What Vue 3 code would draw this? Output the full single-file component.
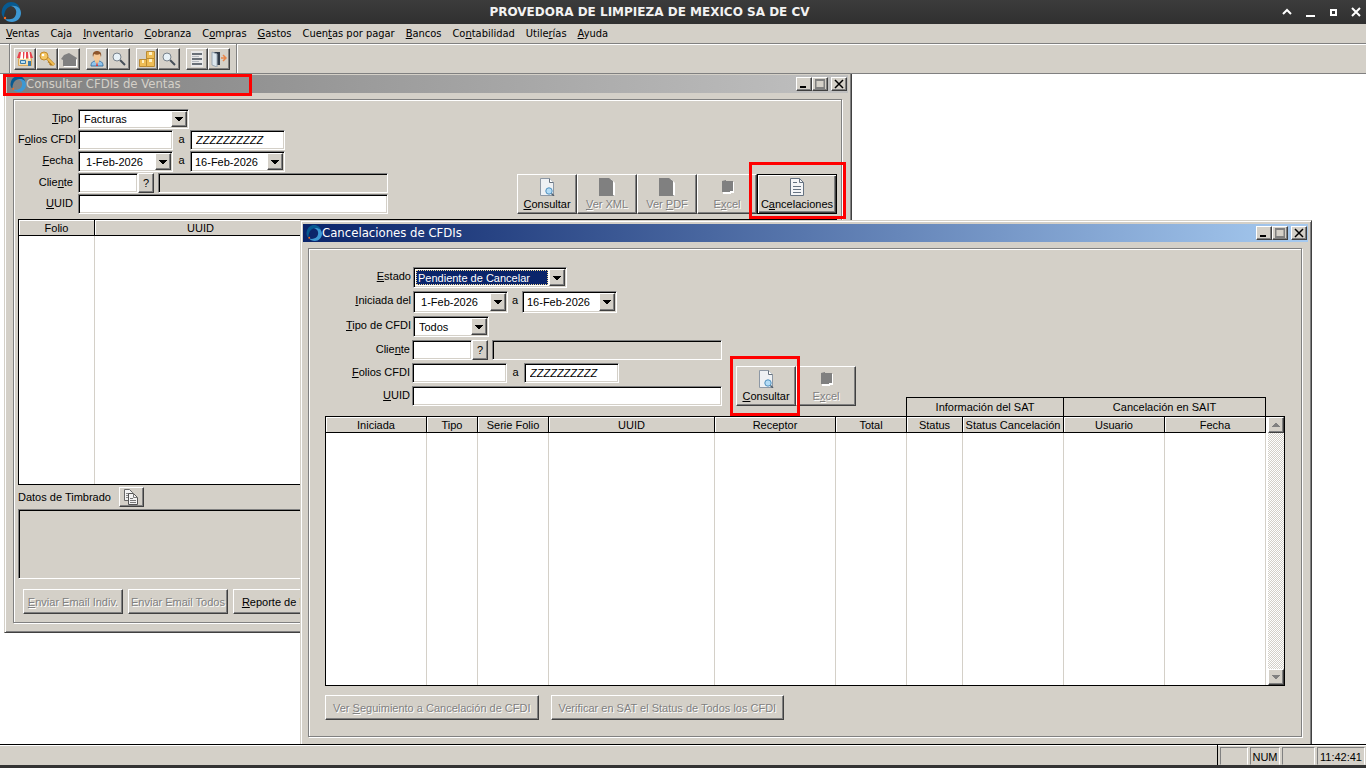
<script setup>
import { ref, h } from 'vue';

// "&" marks the access key, as in Windows menus
const Mnemonic = (props) => {
    const [before, rest] = props.text.split('&');
    if (rest === undefined) return h('span', before);
    return h('span', [before, h('u', rest[0]), rest.slice(1)]);
};
Mnemonic.props = ['text'];

const menus = ['&Ventas', 'Caja', '&Inventario', '&Cobranza', 'C&ompras', '&Gastos', 'Cuen&tas por pagar', '&Bancos', 'Co&ntabilidad', 'Utile&rías', '&Ayuda'];

const toolGroups = [
    ['store', 'key', 'house'],
    ['person', 'lens'],
    ['boxes', 'lens'],
    ['list', 'door'],
];

const salesActions = [
    { text: '&Consultar', icon: 'search-doc' },
    { text: '&Ver XML', icon: 'solid-doc', disabled: true },
    { text: 'Ver &PDF', icon: 'solid-doc', disabled: true },
    { text: 'E&xcel', icon: 'solid-book', disabled: true },
    { text: 'C&ancelaciones', icon: 'text-doc', marked: true, isDefault: true },
];
const cancelActions = [
    { text: '&Consultar', icon: 'search-doc', marked: true },
    { text: 'E&xcel', icon: 'solid-book', disabled: true },
];

const columns = [
    { text: 'Iniciada', width: 101 },
    { text: 'Tipo', width: 51 },
    { text: 'Serie Folio', width: 71 },
    { text: 'UUID', width: 166 },
    { text: 'Receptor', width: 121 },
    { text: 'Total', width: 71 },
    { text: 'Status', width: 56 },
    { text: 'Status Cancelación', width: 101 },
    { text: 'Usuario', width: 101 },
    { text: 'Fecha', width: 101 },
];

const tipo = ref('Facturas');
const estado = ref('Pendiente de Cancelar');
const tipoCfdi = ref('Todos');
const desde = ref(' 1-Feb-2026');
const hasta = ref('16-Feb-2026');
const folioFin = ref('ZZZZZZZZZZ');
</script>

<template>
    <svg class="defs" aria-hidden="true">
        <symbol id="logo" viewBox="0 0 20 20">
            <path d="M3 16C1 14 0 11 1 8 2 3 6 0 10 0c5 0 8 3 9 7-3-3-7-4-10-2.500C5 6 3 10 3 16z" fill="#075a91" />
            <path d="M10 4c6-1 10 2 10 7 0 5-4 9-9 9-3 0-6-1-7-3 5 1 10 0 11-5 1-4-1-7-5-8z" fill="#3d98d3" />
            <circle cx="4" cy="16" r="1.200" fill="#f26b21" />
        </symbol>
        <symbol id="store" viewBox="0 0 16 16">
            <path d="M1.500 7.500h13v7h-13z" fill="#f6deae" stroke="#d9a95c" />
            <path d="M2 1h12l2 6H0z" fill="#e9444c" />
            <path d="M4 1h2v7H3zM7.500 1h1.500v7H7zM11 1h1.500l1 7h-2z" fill="#fff" />
            <path d="M3.500 9.500h5v3h-5z" fill="#b8e2f7" stroke="#3979a8" />
            <path d="M11 10h3v5h-3z" fill="#3979a8" />
        </symbol>
        <symbol id="key" viewBox="0 0 16 16">
            <path d="M8 7l7 7M11 10l-1 2M13 12l-2 2" stroke="#b37a1b" stroke-width="3" />
            <path d="M8 7l7 7" stroke="#f0bd55" stroke-width="2" />
            <circle cx="5" cy="5" r="4" fill="#f5c763" stroke="#c38a2b" />
            <circle cx="4" cy="4" r="1.300" fill="#fff" />
        </symbol>
        <symbol id="house" viewBox="0 0 16 16">
            <path d="M9 3l7 5v8H3V9z" fill="#fff" />
            <path d="M8 2l8 5-1 2v6H2V9L0 8l3-4z" fill="#808080" />
        </symbol>
        <symbol id="person" viewBox="0 0 16 16">
            <path d="M2 15c0-4 2-5 6-5s6 1 6 5z" fill="#8ec4ed" stroke="#3d75a4" />
            <path d="M6 8h4v3l-2 2-2-2z" fill="#f2c38e" />
            <ellipse cx="8" cy="5.500" rx="3.500" ry="4" fill="#f5c896" />
            <path d="M4 6C3 2 5 0 8 0s5 2 4 6l-1-3c-2 1-4 1-6 0z" fill="#8e562c" />
            <path d="M8 11l-1 4h2z" fill="#d33" />
        </symbol>
        <symbol id="lens" viewBox="0 0 16 16">
            <path d="M9 9l5 5" stroke="#454f58" stroke-width="2" />
            <circle cx="6" cy="6" r="4" fill="#e7f1f7" stroke="#78828b" />
        </symbol>
        <symbol id="boxes" viewBox="0 0 16 16">
            <g fill="#eebd55" stroke="#b98a34">
                <path d="M7.500.500h8v7h-8zM.500 8.500h7v7h-7zM7.500 7.500h8v8h-8z" />
            </g>
            <path d="M10 1h3v3h-3zM3 9h2v3H3zM10 8h3v3h-3z" fill="#fff1c5" />
        </symbol>
        <symbol id="list" viewBox="0 0 16 16">
            <path d="M2 0h12v16H2z" fill="#e8e8e8" />
            <path d="M3 3h10M3 8h10M3 13h10" stroke="#697078" stroke-width="2" />
            <path d="M3 5.500h7M3 10.500h7" stroke="#b5bac0" />
        </symbol>
        <symbol id="door" viewBox="0 0 16 16">
            <path d="M1 1h8v13H1z" fill="#303b49" />
            <path d="M1 1l5 2v13l-5-2z" fill="#dce7ef" stroke="#9aa7b3" />
            <path d="M10 7h4M12 4l3 3-3 3" fill="none" stroke="#e7864b" stroke-width="1.500" />
        </symbol>
        <symbol id="search-doc" viewBox="0 0 16 18">
            <path d="M1.500.500h9l4 4v13h-13z" fill="#eef1f4" stroke="#8d98a5" />
            <path d="M10.500.500v4h4" fill="#fff" stroke="#66727f" />
            <path d="M12 15l3 3" stroke="#53606d" stroke-width="1.500" />
            <circle cx="10" cy="13" r="3.200" fill="#b4dcf6" stroke="#4f90bd" />
        </symbol>
        <symbol id="solid-doc" viewBox="0 0 16 18">
            <path d="M1 1h11l4 4v14H2z" fill="#fff" />
            <path d="M0 0h10l4 3v14l2 1H0z" fill="#808080" />
        </symbol>
        <symbol id="solid-book" viewBox="0 0 16 18">
            <path d="M4 4h11v11h-3v1H4z" fill="#fff" />
            <path d="M3 3l4-1v1h7v10h-3v1H3z" fill="#808080" />
        </symbol>
        <symbol id="text-doc" viewBox="0 0 16 18">
            <path d="M1.500.500h9l4 4v13h-13z" fill="#f4f5f7" stroke="#667382" />
            <path d="M10.500.500v4h4" fill="none" stroke="#667382" />
            <path d="M4 4.500h4M4 8.500h8M4 11.500h8M4 14.500h8" stroke="#667382" />
        </symbol>
        <symbol id="copy" viewBox="0 0 16 16">
            <path d="M1.500.500h5l3 3v8h-8z" fill="#f2f2f2" stroke="#666" />
            <path d="M3 4.500h4M3 6.500h4M3 8.500h3" stroke="#888" />
            <path d="M5.500 4.500h5l4 4v7h-9z" fill="#f2f2f2" stroke="#555" />
            <path d="M10.500 4.500v4h4M7 9.500h3M7 11.500h6M7 13.500h6" fill="none" stroke="#777" />
        </symbol>
        <symbol id="arrow" viewBox="0 0 8 4">
            <path d="M0 0h8v1H7v1H6v1H5v1H3V3H2V2H1V1H0z" fill="currentColor" />
        </symbol>
    </svg>

    <div class="app">
        <header class="titlebar">
            <svg class="app-logo"><use href="#logo" /></svg>
            <h1>PROVEDORA DE LIMPIEZA DE MEXICO SA DE CV</h1>
            <div class="sys">
                <button aria-label="Enrollar"><svg viewBox="0 0 10 10"><path d="M1 7l4-4 4 4" /></svg></button>
                <button aria-label="Minimizar"><svg viewBox="0 0 10 10"><path d="M1 9h9" /></svg></button>
                <button aria-label="Maximizar"><svg viewBox="0 0 10 10"><path d="M3 3h5v5H3z" /></svg></button>
                <button aria-label="Cerrar"><svg viewBox="0 0 10 10"><path d="M1 1l8 8M9 1L1 9" /></svg></button>
            </div>
        </header>

        <nav class="menubar">
            <button v-for="menu in menus" :key="menu"><Mnemonic :text="menu" /></button>
        </nav>

        <div class="toolbar">
            <div class="toolbox">
                <div v-for="(group, g) in toolGroups" :key="g" class="tool-group">
                    <button v-for="icon in group" :key="icon" :aria-label="icon" class="raised">
                        <svg><use :href="'#' + icon" /></svg>
                    </button>
                </div>
            </div>
        </div>

        <main class="desktop">
            <section class="window sales">
                <div class="caption inactive marked">
                    <svg><use href="#logo" /></svg>
                    <h2>Consultar CFDIs de Ventas</h2>
                    <button class="raised" aria-label="Minimizar"><svg viewBox="0 0 10 10"><path d="M1 8h6" /></svg></button>
                    <button class="raised" aria-label="Maximizar" disabled><svg viewBox="0 0 10 10"><path d="M.5 1h9v8h-9z" /></svg></button>
                    <button class="raised close" aria-label="Cerrar"><svg viewBox="0 0 10 10"><path d="M1 1l8 8M9 1L1 9" /></svg></button>
                </div>
                <div class="panel">
                    <div class="top">
                        <div class="form">
                            <div class="row">
                                <label for="tipo"><Mnemonic text="&Tipo" /></label>
                                <div class="combo sunken tipo">
                                    <select id="tipo" v-model="tipo"><option>Facturas</option></select>
                                    <span class="raised drop"><svg><use href="#arrow" /></svg></span>
                                </div>
                            </div>
                            <div class="row">
                                <label for="folio1"><Mnemonic text="F&olios CFDI" /></label>
                                <input id="folio1" class="sunken folio">
                                <label class="to" for="folio2">a</label>
                                <input id="folio2" v-model="folioFin" class="sunken folio last">
                            </div>
                            <div class="row date-row">
                                <label for="fecha1"><Mnemonic text="&Fecha" /></label>
                                <div class="combo sunken date">
                                    <input id="fecha1" v-model="desde">
                                    <button class="raised drop" aria-label="Calendario"><svg><use href="#arrow" /></svg></button>
                                </div>
                                <label class="to" for="fecha2">a</label>
                                <div class="combo sunken date">
                                    <input id="fecha2" v-model="hasta">
                                    <button class="raised drop" aria-label="Calendario"><svg><use href="#arrow" /></svg></button>
                                </div>
                            </div>
                            <div class="row">
                                <label for="cliente1"><Mnemonic text="Clie&nte" /></label>
                                <input id="cliente1" class="sunken client">
                                <button class="raised ask">?</button>
                                <input class="sunken client-name" aria-label="Nombre" readonly>
                            </div>
                            <div class="row">
                                <label for="uuid1"><Mnemonic text="&UUID" /></label>
                                <input id="uuid1" class="sunken uuid">
                            </div>
                        </div>
                        <div class="actions">
                            <div v-for="a in salesActions" :key="a.text" :class="{ marked: a.marked }">
                                <button class="raised action" :class="{ default: a.isDefault }" :disabled="a.disabled">
                                    <svg><use :href="'#' + a.icon" /></svg>
                                    <Mnemonic :text="a.text" />
                                </button>
                            </div>
                        </div>
                    </div>
                    <table class="grid">
                        <colgroup><col class="col-folio"><col class="col-uuid"><col></colgroup>
                        <thead><tr><th>Folio</th><th>UUID</th><th></th></tr></thead>
                        <tbody><tr><td></td><td></td><td></td></tr></tbody>
                    </table>
                    <div class="stamp">
                        <label for="timbrado">Datos de Timbrado</label>
                        <button class="raised" aria-label="Copiar"><svg><use href="#copy" /></svg></button>
                    </div>
                    <textarea id="timbrado" class="sunken" readonly></textarea>
                    <div class="footer">
                        <button class="raised" disabled><Mnemonic text="&Enviar Email Indiv." /></button>
                        <button class="raised" disabled>Enviar Email Todos</button>
                        <button class="raised report"><Mnemonic text="&Reporte de Impuestos" /></button>
                    </div>
                </div>
            </section>

            <section class="window cancel">
                <div class="caption">
                    <svg><use href="#logo" /></svg>
                    <h2>Cancelaciones de CFDIs</h2>
                    <button class="raised" aria-label="Minimizar"><svg viewBox="0 0 10 10"><path d="M1 8h6" /></svg></button>
                    <button class="raised" aria-label="Maximizar" disabled><svg viewBox="0 0 10 10"><path d="M.5 1h9v8h-9z" /></svg></button>
                    <button class="raised close" aria-label="Cerrar"><svg viewBox="0 0 10 10"><path d="M1 1l8 8M9 1L1 9" /></svg></button>
                </div>
                <div class="panel">
                    <div class="top">
                        <div class="form">
                            <div class="row">
                                <label for="estado"><Mnemonic text="&Estado" /></label>
                                <div class="combo sunken estado">
                                    <select id="estado" v-model="estado"><option>Pendiente de Cancelar</option></select>
                                    <span class="raised drop"><svg><use href="#arrow" /></svg></span>
                                </div>
                            </div>
                            <div class="row date-row">
                                <label for="inicio"><Mnemonic text="&Iniciada del" /></label>
                                <div class="combo sunken date">
                                    <input id="inicio" v-model="desde">
                                    <button class="raised drop" aria-label="Calendario"><svg><use href="#arrow" /></svg></button>
                                </div>
                                <label class="to near" for="fin">a</label>
                                <div class="combo sunken date">
                                    <input id="fin" v-model="hasta">
                                    <button class="raised drop" aria-label="Calendario"><svg><use href="#arrow" /></svg></button>
                                </div>
                            </div>
                            <div class="row">
                                <label for="tipocfdi"><Mnemonic text="&Tipo de CFDI" /></label>
                                <div class="combo sunken tipo-cfdi">
                                    <select id="tipocfdi" v-model="tipoCfdi"><option>Todos</option></select>
                                    <span class="raised drop"><svg><use href="#arrow" /></svg></span>
                                </div>
                            </div>
                            <div class="row">
                                <label for="cliente2"><Mnemonic text="Clie&nte" /></label>
                                <input id="cliente2" class="sunken client">
                                <button class="raised ask">?</button>
                                <input class="sunken client-name" aria-label="Nombre" readonly>
                            </div>
                            <div class="row">
                                <label for="folio3"><Mnemonic text="&Folios CFDI" /></label>
                                <input id="folio3" class="sunken folio">
                                <label class="to" for="folio4">a</label>
                                <input id="folio4" v-model="folioFin" class="sunken folio last">
                            </div>
                            <div class="row">
                                <label for="uuid2"><Mnemonic text="&UUID" /></label>
                                <input id="uuid2" class="sunken uuid">
                            </div>
                        </div>
                        <div class="actions">
                            <div v-for="a in cancelActions" :key="a.text" :class="{ marked: a.marked }">
                                <button class="raised action" :disabled="a.disabled">
                                    <svg><use :href="'#' + a.icon" /></svg>
                                    <Mnemonic :text="a.text" />
                                </button>
                            </div>
                        </div>
                        <div class="groups">
                            <span>Información del SAT</span>
                            <span>Cancelación en SAIT</span>
                        </div>
                    </div>
                    <div class="grid-box">
                        <table class="grid">
                            <colgroup><col v-for="c in columns" :key="c.text" :style="{ width: c.width + 'px' }"></colgroup>
                            <thead><tr><th v-for="c in columns" :key="c.text">{{ c.text }}</th></tr></thead>
                            <tbody><tr><td v-for="c in columns" :key="c.text"></td></tr></tbody>
                        </table>
                        <div class="scroll">
                            <button class="raised up" aria-label="Subir" disabled><svg><use href="#arrow" /></svg></button>
                            <button class="raised" aria-label="Bajar" disabled><svg><use href="#arrow" /></svg></button>
                        </div>
                    </div>
                    <div class="footer">
                        <button class="raised" disabled><Mnemonic text="Ver &Seguimiento a Cancelación de CFDI" /></button>
                        <button class="raised" disabled>Verificar en SAT el Status de Todos los CFDI</button>
                    </div>
                </div>
            </section>
        </main>

        <footer class="status">
            <span class="message"></span>
            <span class="cell small"></span>
            <span class="cell num">NUM</span>
            <span class="cell"></span>
            <span class="cell clock">11:42:41</span>
        </footer>
    </div>
</template>

<style>
body {
    margin: 0;
    background: #fff;
}
</style>

<style scoped>
* {
    box-sizing: border-box;
}
.defs {
    position: absolute;
    width: 0;
    height: 0;
}
.app {
    display: flex;
    flex-direction: column;
    min-height: 100vh;
    font: 11px/14px "Liberation Sans", Arial, sans-serif;
    color: #000;
    cursor: default;
}
button, input, select, textarea {
    font: inherit;
    color: inherit;
    border-radius: 0;
    margin: 0;
    padding: 0;
    outline: none;
}
button {
    white-space: nowrap;
}
svg {
    display: block;
    flex: none;
}
:deep(u) {
    text-underline-offset: 1px;
    text-decoration-skip-ink: none;
}
.raised {
    background: #d4d0c8;
    border: 1px solid;
    border-color: #fff #404040 #404040 #fff;
    box-shadow: inset -1px -1px #808080;
}
.raised:disabled {
    color: #808080;
    text-shadow: 1px 1px #fff;
}
.sunken {
    background: #fff;
    border: 1px solid;
    border-color: #808080 #fff #fff #808080;
    box-shadow: inset 1px 1px #000, inset -1px -1px #d4d0c8;
}
.sunken:read-only:not(div) {
    background: #d4d0c8;
}

/* main window */
.titlebar {
    display: flex;
    align-items: center;
    height: 24px;
    background: linear-gradient(#3c3c3c, #303030);
    color: #f2f2f2;
}
.titlebar h1 {
    flex: 1;
    margin: 0;
    padding-right: 4px;
    text-align: center;
    font: bold 12px/20px "DejaVu Sans", sans-serif;
}
.app-logo {
    width: 20px;
    height: 20px;
    margin-left: 1px;
}
.sys {
    display: flex;
    gap: 13px;
    padding-right: 5px;
}
.sys button {
    border: 0;
    background: none;
}
.sys svg {
    width: 10px;
    height: 10px;
    fill: none;
    stroke: #fff;
    stroke-width: 2;
}
.menubar {
    display: flex;
    gap: 11px;
    height: 19px;
    padding: 1px 6px 0;
    background: #d4d0c8;
    font-family: "DejaVu Sans Condensed", "DejaVu Sans", sans-serif;
}
.menubar button {
    border: 0;
    background: none;
}
.toolbar {
    display: flex;
    padding-left: 9px;
    height: 31px;
    background: #d4d0c8;
    border-top: 1px solid #808080;
    border-bottom: 1px solid #808080;
    box-shadow: inset 0 1px #fff;
}
.toolbox {
    display: flex;
    gap: 6px;
    padding: 4px 6px 0 4px;
    border-left: 1px solid #808080;
    border-right: 1px solid #808080;
    box-shadow: inset 1px 0 #fff, 1px 0 #fff;
}
.tool-group {
    display: flex;
}
.tool-group button {
    width: 22px;
    height: 22px;
    padding: 2px;
}
.tool-group svg {
    width: 16px;
    height: 16px;
}
.desktop {
    position: relative;
    flex: 1;
    overflow: hidden;
    background: #fff;
}

/* child windows */
.window {
    position: absolute;
    padding: 3px 3px 9px 2px;
    background: #d4d0c8;
    border: 1px solid;
    border-color: #d4d0c8 #404040 #404040 #d4d0c8;
    box-shadow: inset 1px 1px #fff, inset -1px -1px #808080;
}
.sales {
    left: 4px;
    top: -3px;
    width: 848px;
}
.cancel {
    left: 300px;
    top: 146px;
    width: 1012px;
}
.caption {
    display: flex;
    align-items: center;
    height: 18px;
    padding: 0 1px 0 3px;
    background: linear-gradient(90deg, #0a246a, #a6caf0);
    color: #fff;
}
.caption.inactive {
    background: linear-gradient(90deg, #808080, #c0c0c0);
    color: #d4d0c8;
}
.caption h2 {
    flex: 1;
    margin: 0;
    font: 13px/18px "DejaVu Sans Condensed", "DejaVu Sans", sans-serif;
}
.caption > svg {
    width: 16px;
    height: 16px;
}
.caption button {
    width: 16px;
    height: 14px;
    padding: 1px 2px;
}
.caption button svg {
    width: 10px;
    height: 10px;
    fill: none;
    stroke: #000;
    stroke-width: 2;
}
.caption button:disabled svg {
    stroke: #808080;
}
.caption .close {
    margin-left: 3px;
}
.caption .close svg {
    stroke-width: 1.5;
}
.panel {
    margin: 6px 6px 0 5px;
    border: 1px solid #808080;
    box-shadow: inset 1px 1px #fff, 1px 1px #fff;
}
.sales .panel {
    margin-left: 6px;
    padding: 9px 4px 8px;
}
.cancel .panel {
    padding: 18px 16px 16px;
}

/* red highlights */
.marked {
    position: relative;
}
.marked::after {
    content: "";
    position: absolute;
    z-index: 1;
    border: 3px solid #f00;
    pointer-events: none;
}
.sales .actions .marked::after {
    inset: -12px -9px -5px -8px;
}
.cancel .actions .marked::after {
    inset: -10px -4px -10px -6px;
}
.caption.marked::after {
    inset: -1px auto -3px -4px;
    width: 243px;
}

/* forms */
.top {
    display: flex;
    align-items: flex-end;
}
.form {
    display: grid;
    gap: 1px;
}
.cancel .form {
    gap: 3px;
    margin-bottom: 10px;
}
.row {
    display: flex;
    height: 20px;
}
.date-row {
    height: 21px;
}
.cancel .row:nth-child(-n+3) {
    height: 21px;
}
.cancel .date-row:nth-child(-n+3) {
    height: 22px;
}
.row label {
    width: 60px;
    padding: 2px 5px 0 0;
    text-align: right;
    white-space: nowrap;
}
.cancel .row label {
    width: 88px;
    padding-right: 2px;
}
.cancel .row:nth-child(n+4) label:first-child {
    width: 87px;
}
.row .to, .cancel .row .to {
    width: 17px;
    padding: 2px 0 0;
    text-align: center;
}
.cancel .row .near {
    width: 14px;
}
.row input {
    padding: 0 5px;
    min-width: 0;
}
.row .combo input {
    padding: 0 3px;
}
.row .folio, .date {
    width: 95px;
}
.last {
    font-style: italic;
}
.client {
    width: 60px;
}
.ask {
    width: 16px;
    margin-right: 4px;
}
.client-name {
    width: 230px;
}
.uuid {
    width: 310px;
}
.combo {
    display: flex;
    padding: 1px;
}
.combo input, .combo select {
    flex: 1;
    width: 0;
    border: 0;
    background: transparent;
}
.combo select {
    appearance: none;
    padding-left: 4px;
}
.estado select {
    margin: 1px;
    padding-left: 2px;
    background: #0a246a;
    color: #fff;
    outline: 1px dotted #f5db95;
    outline-offset: -1px;
}
.drop {
    display: flex;
    align-items: center;
    justify-content: center;
    width: 16px;
}
.drop svg {
    width: 8px;
    height: 4px;
}
.tipo {
    width: 111px;
}
.estado {
    width: 154px;
}
.tipo-cfdi {
    width: 76px;
}
.actions {
    display: flex;
    margin-left: auto;
}
.cancel .actions {
    margin: 0 0 10px 14px;
}
.action {
    display: flex;
    flex-direction: column;
    align-items: center;
    gap: 1px;
    width: 60px;
    height: 40px;
    padding-top: 3px;
}
.action svg {
    width: 16px;
    height: 18px;
}
.action.default {
    width: 80px;
    border-color: #000;
    box-shadow: inset 1px 1px #fff, inset -1px -1px #404040, inset -2px -2px #808080;
}
.groups {
    display: flex;
    margin: 0 19px 0 auto;
    border: 1px solid #000;
    border-bottom: 0;
    text-align: center;
    line-height: 18px;
}
.groups span {
    width: 156px;
}
.groups span + span {
    width: 202px;
    border-left: 1px solid #000;
}

/* data grids */
.grid {
    table-layout: fixed;
    border-spacing: 0;
    background: #fff;
}
.grid th {
    height: 16px;
    padding: 0;
    background: #d4d0c8;
    border-right: 1px solid #000;
    border-bottom: 1px solid #000;
    box-shadow: inset 1px 1px #fff;
    font-weight: normal;
    line-height: 14px;
    white-space: nowrap;
}
.grid td {
    height: 252px;
    padding: 0;
    border-right: 1px solid #d4d0c8;
}
.sales .grid {
    width: 100%;
    margin-top: 5px;
    border: 1px solid #000;
}
.sales .grid td {
    height: 248px;
}
.col-folio {
    width: 76px;
}
.col-uuid {
    width: 212px;
}
.grid-box {
    display: flex;
    border: 1px solid #000;
    background: #fff;
}
.grid-box .grid {
    width: 940px;
}
.scroll {
    display: flex;
    flex-direction: column;
    justify-content: space-between;
    width: 16px;
    margin-left: auto;
    background: repeating-conic-gradient(#fff 0 25%, #d4d0c8 0 50%) 0 0 / 2px 2px;
}
.scroll button {
    display: flex;
    align-items: center;
    justify-content: center;
    height: 16px;
}
.scroll svg {
    width: 8px;
    height: 4px;
}
.up svg {
    transform: rotate(180deg);
}
.stamp {
    display: flex;
    gap: 8px;
    align-items: center;
    padding: 2px 0;
}
.stamp button {
    display: flex;
    justify-content: center;
    align-items: center;
    width: 25px;
    height: 20px;
}
.stamp svg {
    width: 16px;
    height: 16px;
}
textarea {
    display: block;
    width: 100%;
    height: 70px;
    resize: none;
}
.footer {
    display: flex;
    gap: 5px;
    padding: 10px 5px 0;
}
.footer button {
    width: 100px;
    height: 25px;
}
.footer .report {
    width: 126px;
}
.cancel .footer {
    gap: 12px;
    padding: 9px 0 0;
}
.cancel .footer button {
    width: auto;
    padding: 0 7px;
}

.status {
    display: flex;
    gap: 2px;
    height: 24px;
    background: #d4d0c8;
    border-top: 1px solid #000;
    border-bottom: 3px solid #333;
    box-shadow: inset 0 1px #fff;
    padding-right: 1px;
}
.message {
    flex: 1;
    border-right: 1px solid #000;
}
.cell {
    width: 33px;
    margin-top: 2px;
    border: 1px solid;
    border-color: #808080 #fff #d4d0c8 #808080;
    line-height: 18px;
    text-align: center;
}
.small {
    width: 28px;
}
.num {
    width: 30px;
}
.clock {
    width: 48px;
}
</style>
